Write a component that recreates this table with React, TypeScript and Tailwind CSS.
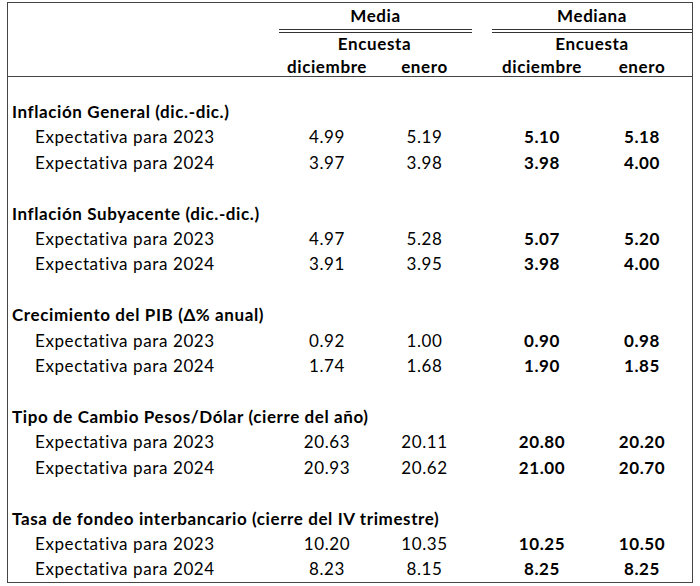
const sections = [
  {
    title: "Inflación General (dic.-dic.)",
    rows: [
      ["Expectativa para 2023", "4.99", "5.19", "5.10", "5.18"],
      ["Expectativa para 2024", "3.97", "3.98", "3.98", "4.00"],
    ],
  },
  {
    title: "Inflación Subyacente (dic.-dic.)",
    rows: [
      ["Expectativa para 2023", "4.97", "5.28", "5.07", "5.20"],
      ["Expectativa para 2024", "3.91", "3.95", "3.98", "4.00"],
    ],
  },
  {
    title: "Crecimiento del PIB (Δ% anual)",
    rows: [
      ["Expectativa para 2023", "0.92", "1.00", "0.90", "0.98"],
      ["Expectativa para 2024", "1.74", "1.68", "1.90", "1.85"],
    ],
  },
  {
    title: "Tipo de Cambio Pesos/Dólar (cierre del año)",
    rows: [
      ["Expectativa para 2023", "20.63", "20.11", "20.80", "20.20"],
      ["Expectativa para 2024", "20.93", "20.62", "21.00", "20.70"],
    ],
  },
  {
    title: "Tasa de fondeo interbancario (cierre del IV trimestre)",
    rows: [
      ["Expectativa para 2023", "10.20", "10.35", "10.25", "10.50"],
      ["Expectativa para 2024", "8.23", "8.15", "8.25", "8.25"],
    ],
  },
];

const grid = "grid grid-cols-[269px_100px_95px_20px_100px_100px]";

export default function App() {
  return (
    <div className="h-[586px] w-[700px] bg-white pl-[7px] pt-[2px] font-['Lato',sans-serif] text-[17px] tracking-[0.6px] text-black">
      <div className="w-[686px] border border-[#444]">
        {/* header */}
        <div className={`${grid} h-[28px] items-center font-bold`}>
          <div />
          <div className="col-span-2 ml-[2px] flex h-full items-center justify-center border-b-[4px] border-double border-[#333]">
            Media
          </div>
          <div />
          <div className="col-span-2 flex h-full items-center justify-center border-b-[4px] border-double border-[#333]">
            Mediana
          </div>
        </div>
        <div className={`${grid} h-[23px] items-center font-bold`}>
          <div />
          <div className="col-span-2 text-center">Encuesta</div>
          <div />
          <div className="col-span-2 text-center">Encuesta</div>
        </div>
        <div className={`${grid} h-[23px] items-center border-b border-[#444] font-bold`}>
          <div />
          <div className="text-center">diciembre</div>
          <div className="text-center">enero</div>
          <div />
          <div className="text-center">diciembre</div>
          <div className="text-center">enero</div>
        </div>

        {/* body */}
        {sections.map((s, i) => (
          <div key={s.title}>
            <div className={i === 0 ? "h-[22px]" : "h-[25.5px]"} />
            <div className="flex h-[25.4px] items-center pl-[4px] font-bold whitespace-nowrap">
              {s.title}
            </div>
            {s.rows.map((r) => (
              <div key={r[0]} className={`${grid} h-[25.4px] items-center`}>
                <div className="pl-[27px]">{r[0]}</div>
                <div className="text-center">{r[1]}</div>
                <div className="text-center">{r[2]}</div>
                <div />
                <div className="text-center font-bold">{r[3]}</div>
                <div className="text-center font-bold">{r[4]}</div>
              </div>
            ))}
          </div>
        ))}
      </div>
    </div>
  );
}
